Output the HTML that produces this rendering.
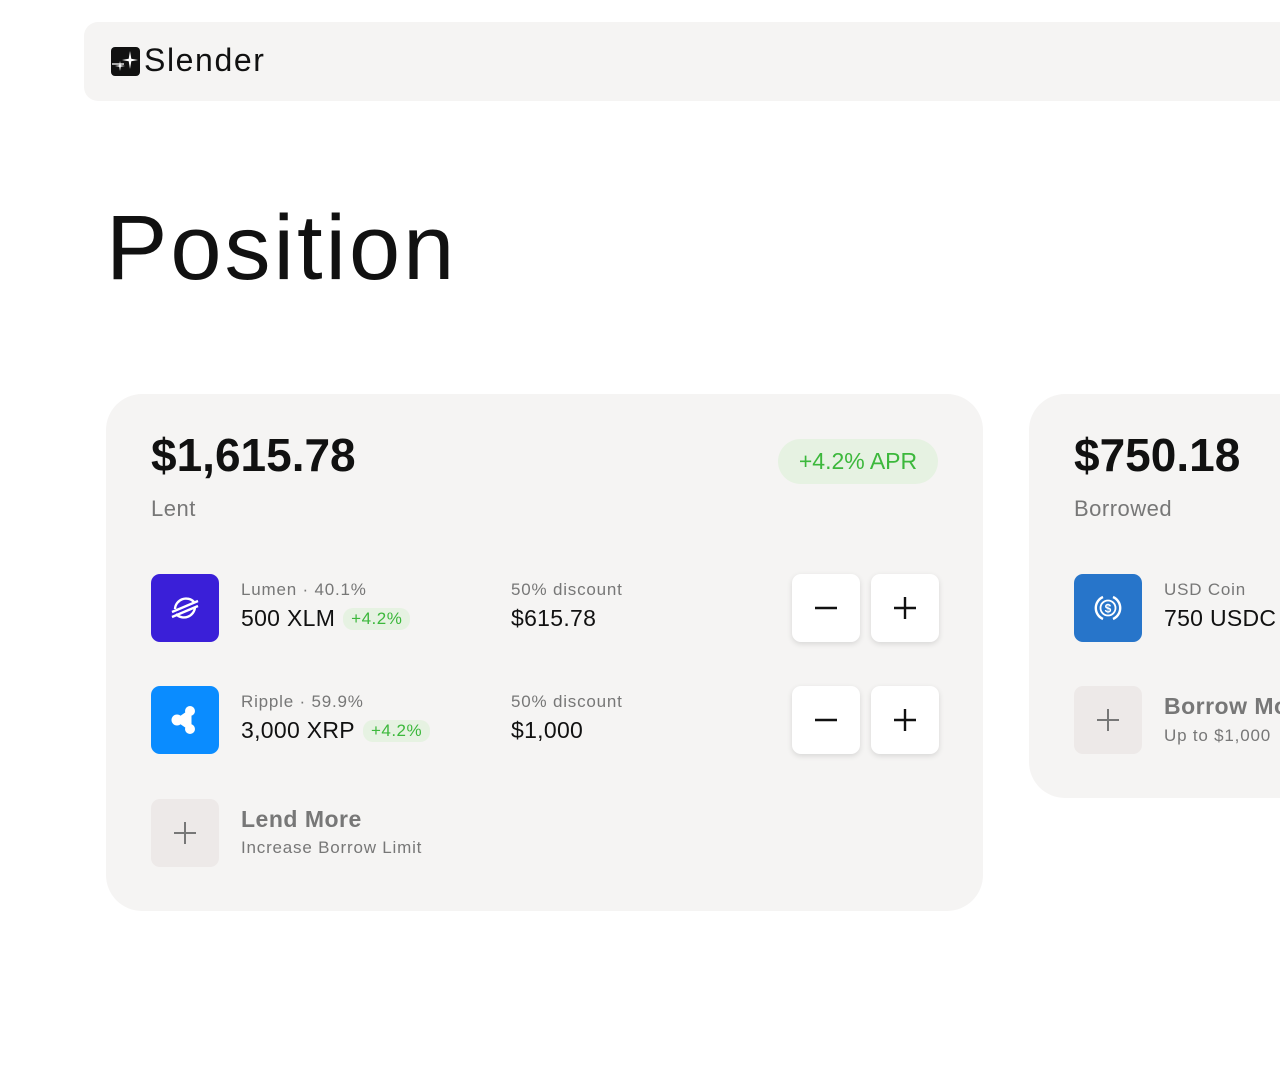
<!DOCTYPE html>
<html><head><meta charset="utf-8"><style>
*{margin:0;padding:0;box-sizing:border-box}
body{width:1280px;height:1088px;background:#fff;font-family:"Liberation Sans",sans-serif;color:#111;position:relative;overflow:hidden}
.nav{position:absolute;left:84px;top:22px;width:1220px;height:79px;background:#f5f4f3;border-radius:14px}
.logo{position:absolute;left:111px;top:47px;width:29px;height:29px;background:#111;border-radius:4px}
.brand{position:absolute;left:144px;top:42px;font-size:32px;letter-spacing:1.6px}
h1{position:absolute;left:106px;top:196px;font-size:92px;font-weight:400;letter-spacing:3px}
.card{position:absolute;background:#f5f4f3;border-radius:36px}
.abs{position:absolute}
.big{font-size:46px;font-weight:700}
.sub{font-size:22px;color:#777;letter-spacing:0.5px}
.ico{position:absolute;width:68px;height:68px;border-radius:9px;display:flex;align-items:center;justify-content:center}
.lbl{font-size:17px;color:#777;letter-spacing:0.8px}
.val{font-size:23px;color:#111;letter-spacing:0.3px}
.tag{display:inline-block;font-size:17px;color:#3cb83c;background:#e6f2e2;border-radius:10px;padding:1px 8px;margin-left:8px;vertical-align:2px;letter-spacing:0.5px}
.btn{position:absolute;width:68px;height:68px;background:#fff;border-radius:9px;box-shadow:0 2px 6px rgba(0,0,0,.12);display:flex;align-items:center;justify-content:center}
.add{background:#ede9e8;box-shadow:none}
</style></head><body>
<div class="nav"></div>
<div class="logo"><svg width="29" height="29" viewBox="0 0 29 29"><path d="M19 4 L20.3 11.7 L27 13 L20.3 14.3 L19 22 L17.7 14.3 L11 13 L17.7 11.7Z M9 14 L9.8 18.2 L14 19 L9.8 19.8 L9 24 L8.2 19.8 L4 19 L8.2 18.2Z" fill="#fff"/><path d="M1 17 H13" stroke="#fff" stroke-width="1.3"/></svg></div>
<div class="brand">Slender</div>
<h1>Position</h1>

<div class="card" style="left:106px;top:394px;width:877px;height:517px"></div>
<div class="abs big" style="left:151px;top:428px">$1,615.78</div>
<div class="abs sub" style="left:151px;top:496px">Lent</div>
<div class="abs" style="left:778px;top:439px;width:160px;height:45px;background:#e6f2e2;border-radius:23px;color:#3cb83c;font-size:23px;text-align:center;line-height:45px">+4.2% APR</div>

<div class="ico" style="left:151px;top:574px;background:#3a1fd8"><svg width="34" height="34" viewBox="0 0 34 34" fill="none" stroke="#fff" stroke-width="2.4"><path d="M26 11 A11 11 0 0 0 7 18"/><path d="M8 23 A11 11 0 0 0 27 16"/><path d="M4 21 L30 10 M4 26 L30 15"/></svg></div>
<div class="abs lbl" style="left:241px;top:580px">Lumen · 40.1%</div>
<div class="abs val" style="left:241px;top:605px">500 XLM<span class="tag">+4.2%</span></div>
<div class="abs lbl" style="left:511px;top:580px">50% discount</div>
<div class="abs val" style="left:511px;top:605px">$615.78</div>
<div class="btn" style="left:792px;top:574px"><svg width="24" height="24"><path d="M1 12H23" stroke="#111" stroke-width="2.4"/></svg></div>
<div class="btn" style="left:871px;top:574px"><svg width="24" height="24"><path d="M1 12H23M12 1V23" stroke="#111" stroke-width="2.4"/></svg></div>

<div class="ico" style="left:151px;top:686px;background:#0a8cff"><svg width="30" height="30" viewBox="0 0 30 30" fill="#fff"><circle cx="20" cy="6" r="5"/><circle cx="20" cy="24" r="5"/><circle cx="7" cy="15" r="5.5"/><path d="M7 15 L20 6 L20 24Z" stroke="#fff" stroke-width="3"/></svg></div>
<div class="abs lbl" style="left:241px;top:692px">Ripple · 59.9%</div>
<div class="abs val" style="left:241px;top:717px">3,000 XRP<span class="tag">+4.2%</span></div>
<div class="abs lbl" style="left:511px;top:692px">50% discount</div>
<div class="abs val" style="left:511px;top:717px">$1,000</div>
<div class="btn" style="left:792px;top:686px"><svg width="24" height="24"><path d="M1 12H23" stroke="#111" stroke-width="2.4"/></svg></div>
<div class="btn" style="left:871px;top:686px"><svg width="24" height="24"><path d="M1 12H23M12 1V23" stroke="#111" stroke-width="2.4"/></svg></div>

<div class="btn add" style="left:151px;top:799px"><svg width="24" height="24"><path d="M1 12H23M12 1V23" stroke="#777" stroke-width="2"/></svg></div>
<div class="abs" style="left:241px;top:806px;font-size:23px;font-weight:700;color:#777;letter-spacing:0.5px">Lend More</div>
<div class="abs lbl" style="left:241px;top:838px">Increase Borrow Limit</div>

<div class="card" style="left:1029px;top:394px;width:400px;height:404px"></div>
<div class="abs big" style="left:1074px;top:428px">$750.18</div>
<div class="abs sub" style="left:1074px;top:496px">Borrowed</div>
<div class="ico" style="left:1074px;top:574px;background:#2775ca"><svg width="30" height="30" viewBox="0 0 30 30" fill="none" stroke="#fff" stroke-width="2.4"><path d="M10 4 A12 12 0 0 0 10 26"/><path d="M20 4 A12 12 0 0 1 20 26"/><circle cx="15" cy="15" r="7.5" stroke-width="1.8"/><text x="15" y="19.5" font-size="12" font-family="Liberation Sans" fill="#fff" stroke="none" text-anchor="middle" font-weight="bold">$</text></svg></div>
<div class="abs lbl" style="left:1164px;top:580px">USD Coin</div>
<div class="abs val" style="left:1164px;top:605px">750 USDC</div>
<div class="btn add" style="left:1074px;top:686px"><svg width="24" height="24"><path d="M1 12H23M12 1V23" stroke="#777" stroke-width="2"/></svg></div>
<div class="abs" style="left:1164px;top:693px;font-size:23px;font-weight:700;color:#777;white-space:nowrap;letter-spacing:0.5px">Borrow More</div>
<div class="abs lbl" style="left:1164px;top:726px;white-space:nowrap">Up to $1,000</div>
</body></html>
